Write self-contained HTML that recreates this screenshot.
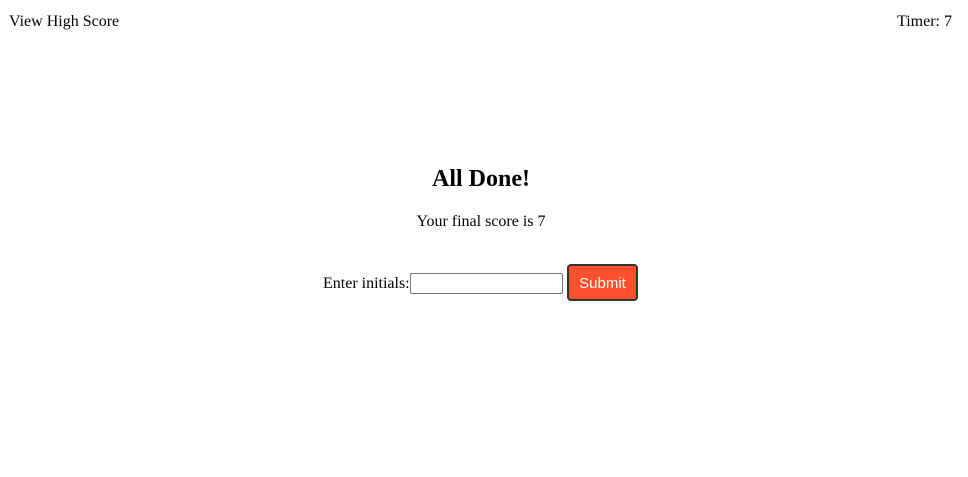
<!DOCTYPE html>
<html><head><style>
body{margin:0;width:968px;height:477px;background:#fff;font-family:"Liberation Serif",serif;font-size:16px;color:#000;position:relative;overflow:hidden}
.a{position:absolute;white-space:nowrap}
</style></head><body>
<div class="a" style="left:9px;top:13px">View High Score</div>
<div class="a" style="right:16px;top:13px">Timer: 7</div>
<div class="a" style="left:0;width:962px;text-align:center;top:166px;font-size:24px;font-weight:bold">All Done!</div>
<div class="a" style="left:0;width:962px;text-align:center;top:213px">Your final score is 7</div>
<div class="a" style="left:323px;top:275px">Enter initials:</div>
<div class="a" style="left:410px;top:273px;width:151px;height:19px;border:1px solid #767676;border-radius:2px"></div>
<div class="a" style="left:567px;top:264px;width:67px;height:33px;background:#ff4f2c;border:2px solid #333;border-radius:4px;color:#fff;font-family:'Liberation Sans',sans-serif;font-size:15px;text-align:center;line-height:35px">Submit</div>
</body></html>
